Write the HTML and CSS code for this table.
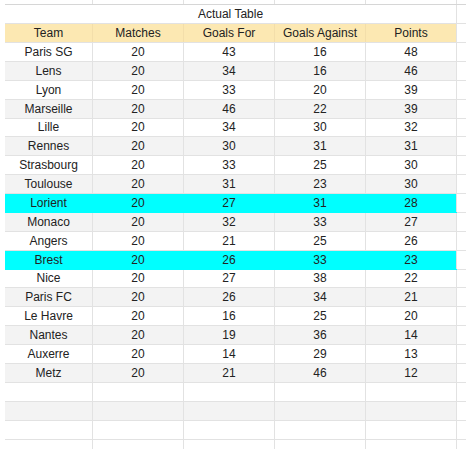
FILE: index.html
```html
<!DOCTYPE html>
<html>
<head>
<meta charset="utf-8">
<link rel="stylesheet" href="styles.css">
</head>
<body>
<div class="sheet">
  <div class="row top"><div class="c c1"></div><div class="c"></div><div class="c"></div><div class="c"></div><div class="c"></div><div class="c last"></div></div>
  <div class="row title"><div class="merged">Actual Table</div><div class="c last"></div></div>
  <div class="row head"><div class="c c1">Team</div><div class="c">Matches</div><div class="c">Goals For</div><div class="c">Goals Against</div><div class="c">Points</div><div class="c last"></div></div>
  <div class="row data"><div class="c c1">Paris SG</div><div class="c">20</div><div class="c">43</div><div class="c">16</div><div class="c">48</div><div class="c last"></div></div>
  <div class="row data alt"><div class="c c1">Lens</div><div class="c">20</div><div class="c">34</div><div class="c">16</div><div class="c">46</div><div class="c last"></div></div>
  <div class="row data"><div class="c c1">Lyon</div><div class="c">20</div><div class="c">33</div><div class="c">20</div><div class="c">39</div><div class="c last"></div></div>
  <div class="row data alt"><div class="c c1">Marseille</div><div class="c">20</div><div class="c">46</div><div class="c">22</div><div class="c">39</div><div class="c last"></div></div>
  <div class="row data"><div class="c c1">Lille</div><div class="c">20</div><div class="c">34</div><div class="c">30</div><div class="c">32</div><div class="c last"></div></div>
  <div class="row data alt"><div class="c c1">Rennes</div><div class="c">20</div><div class="c">30</div><div class="c">31</div><div class="c">31</div><div class="c last"></div></div>
  <div class="row data"><div class="c c1">Strasbourg</div><div class="c">20</div><div class="c">33</div><div class="c">25</div><div class="c">30</div><div class="c last"></div></div>
  <div class="row data alt"><div class="c c1">Toulouse</div><div class="c">20</div><div class="c">31</div><div class="c">23</div><div class="c">30</div><div class="c last"></div></div>
  <div class="row data hl"><div class="c c1">Lorient</div><div class="c">20</div><div class="c">27</div><div class="c">31</div><div class="c">28</div><div class="c last"></div></div>
  <div class="row data alt"><div class="c c1">Monaco</div><div class="c">20</div><div class="c">32</div><div class="c">33</div><div class="c">27</div><div class="c last"></div></div>
  <div class="row data"><div class="c c1">Angers</div><div class="c">20</div><div class="c">21</div><div class="c">25</div><div class="c">26</div><div class="c last"></div></div>
  <div class="row data hl"><div class="c c1">Brest</div><div class="c">20</div><div class="c">26</div><div class="c">33</div><div class="c">23</div><div class="c last"></div></div>
  <div class="row data"><div class="c c1">Nice</div><div class="c">20</div><div class="c">27</div><div class="c">38</div><div class="c">22</div><div class="c last"></div></div>
  <div class="row data alt"><div class="c c1">Paris FC</div><div class="c">20</div><div class="c">26</div><div class="c">34</div><div class="c">21</div><div class="c last"></div></div>
  <div class="row data"><div class="c c1">Le Havre</div><div class="c">20</div><div class="c">16</div><div class="c">25</div><div class="c">20</div><div class="c last"></div></div>
  <div class="row data alt"><div class="c c1">Nantes</div><div class="c">20</div><div class="c">19</div><div class="c">36</div><div class="c">14</div><div class="c last"></div></div>
  <div class="row data"><div class="c c1">Auxerre</div><div class="c">20</div><div class="c">14</div><div class="c">29</div><div class="c">13</div><div class="c last"></div></div>
  <div class="row data alt"><div class="c c1">Metz</div><div class="c">20</div><div class="c">21</div><div class="c">46</div><div class="c">12</div><div class="c last"></div></div>
  <div class="row"><div class="c c1"></div><div class="c"></div><div class="c"></div><div class="c"></div><div class="c"></div><div class="c last"></div></div>
  <div class="row alt"><div class="c c1"></div><div class="c"></div><div class="c"></div><div class="c"></div><div class="c"></div><div class="c last"></div></div>
  <div class="row"><div class="c c1"></div><div class="c"></div><div class="c"></div><div class="c"></div><div class="c"></div><div class="c last"></div></div>
  <div class="row fade"><div class="c c1"></div><div class="c"></div><div class="c"></div><div class="c"></div><div class="c"></div><div class="c last"></div></div>
</div>
</body>
</html>
```

FILE: styles.css
```css
html, body {
  margin: 0;
  padding: 0;
  background: #ffffff;
}

.sheet {
  padding-left: 5px;
  font-family: "Liberation Sans", Arial, sans-serif;
  font-size: 12px;
  color: #222222;
  overflow: hidden;
  width: 461px;
}

.row {
  display: flex;
  height: 19px;
  box-sizing: border-box;
  border-bottom: 1px solid #e2e2e2;
  background: #ffffff;
}

.row.top {
  height: 5px;
  border-bottom-color: #d6d6d6;
}

.row.data {
  height: 18.89px;
}

.row.alt {
  background: #f3f3f3;
}

.c {
  box-sizing: border-box;
  width: 91px;
  flex: none;
  border-right: 1px solid #e2e2e2;
  display: flex;
  align-items: center;
  justify-content: center;
  white-space: nowrap;
}

.c.c1 {
  width: 88px;
}

.c.last {
  width: 20px;
  background: #ffffff;
}

.merged {
  box-sizing: border-box;
  width: 452px;
  flex: none;
  border-right: 1px solid #e2e2e2;
  display: flex;
  align-items: center;
  justify-content: center;
}

.row.head {
  background: #fce8b2;
}

.row.head .c {
  border-right-color: #f3deaa;
}

.row.head .c:nth-child(5),
.row.hl .c:nth-child(5) {
  border-right-color: #e2e2e2;
}

.row.head .c.last {
  border-right-color: #e2e2e2;
}

.row.hl {
  background: #00ffff;
  border-bottom-color: #00ffff;
}

.row.hl .c {
  border-right-color: #00ffff;
}

.row.hl .c.last {
  border-bottom: 1px solid #e2e2e2;
  margin-bottom: -1px;
}

.row.fade {
  height: 12px;
  border-bottom: none;
}
```
